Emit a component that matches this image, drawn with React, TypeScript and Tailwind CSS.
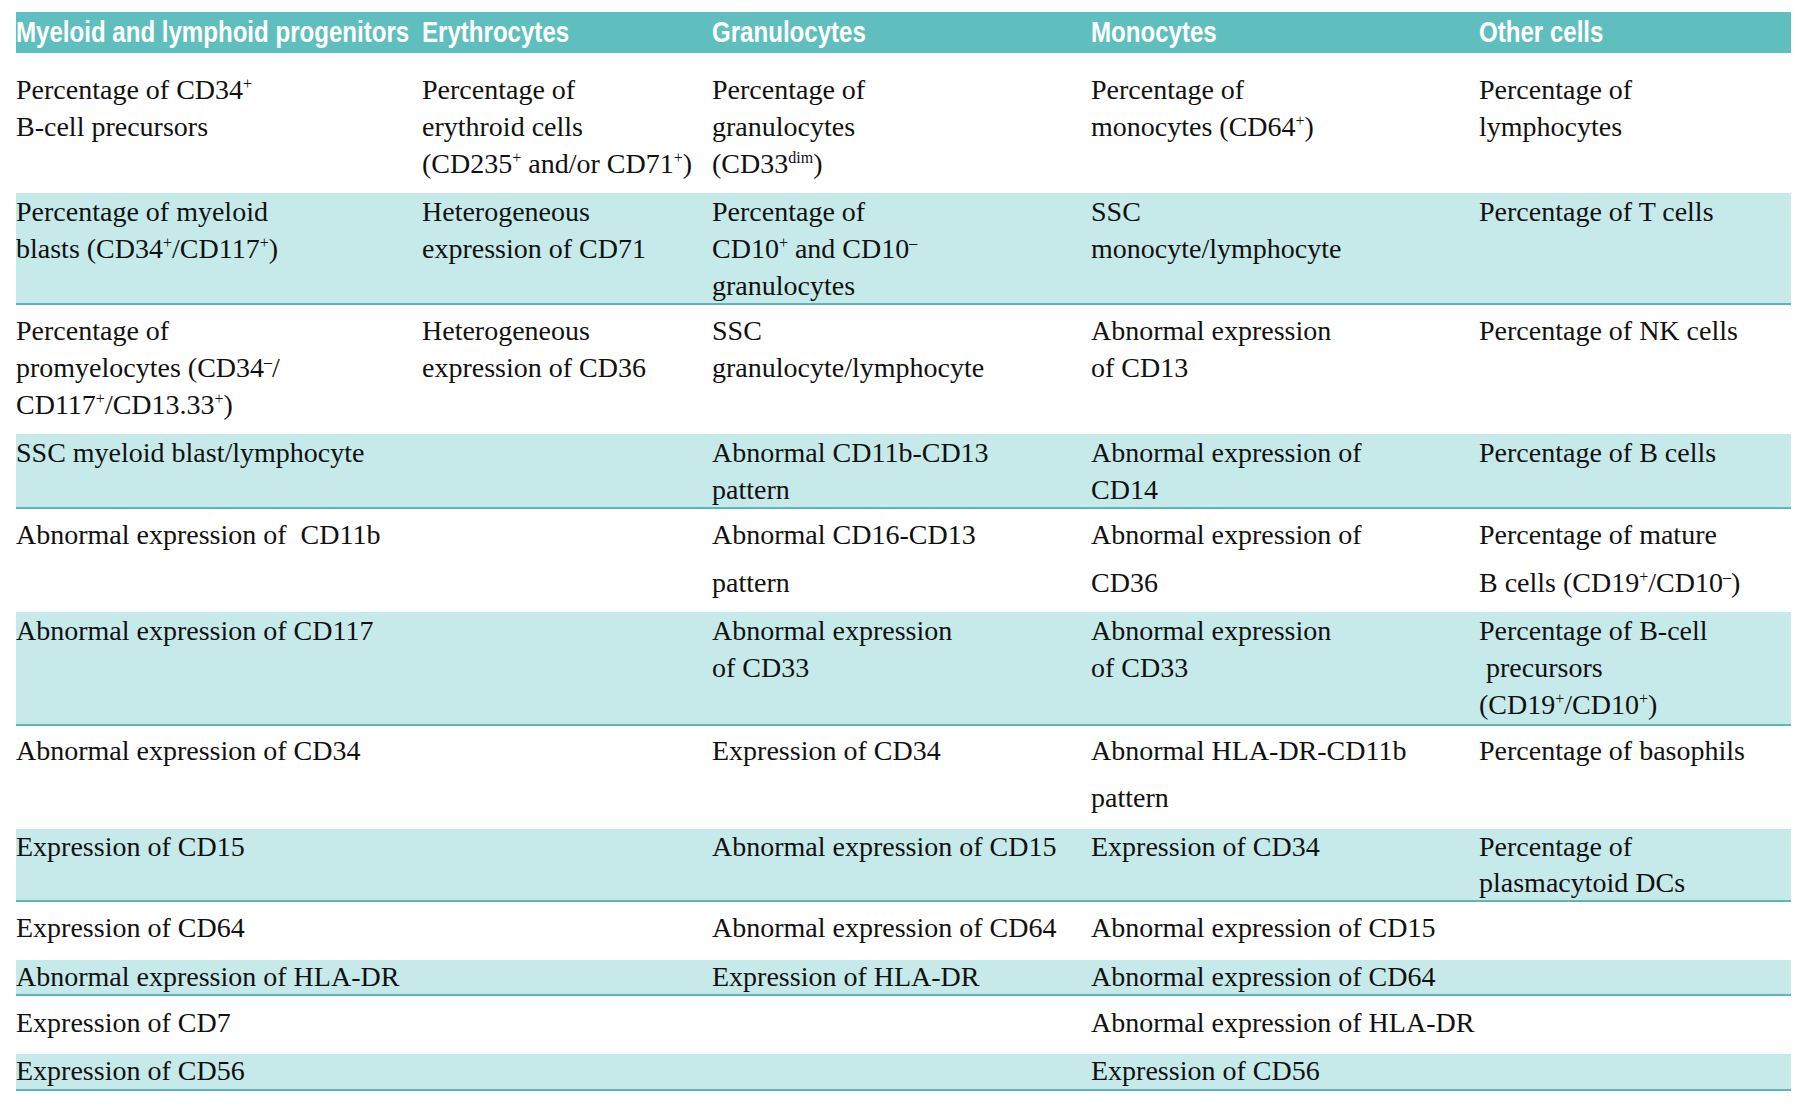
import React from 'react';

type Row = {
  teal: boolean;
  height: string;
  pad: string;
  leading: string;
  cells: React.ReactNode[][];
};

function Sup({ children }: { children: React.ReactNode }) {
  return <sup className="top-[-0.62em] text-[16px]">{children}</sup>;
}

const headers = ['Myeloid and lymphoid progenitors', 'Erythrocytes', 'Granulocytes', 'Monocytes', 'Other cells'];

const rows: Row[] = [
  {
    teal: false,
    height: 'h-[140px]',
    pad: 'pt-[18px]',
    leading: 'leading-[37px]',
    cells: [
      [<>Percentage of CD34<Sup>+</Sup></>, 'B-cell precursors'],
      ['Percentage of', 'erythroid cells', <>(CD235<Sup>+</Sup> and/or CD71<Sup>+</Sup>)</>],
      ['Percentage of', 'granulocytes', <>(CD33<Sup>dim</Sup>)</>],
      ['Percentage of', <>monocytes (CD64<Sup>+</Sup>)</>],
      ['Percentage of', 'lymphocytes'],
    ],
  },
  {
    teal: true,
    height: 'h-[112px]',
    pad: 'pt-0',
    leading: 'leading-[37px]',
    cells: [
      ['Percentage of myeloid', <>blasts (CD34<Sup>+</Sup>/CD117<Sup>+</Sup>)</>],
      ['Heterogeneous', 'expression of CD71'],
      ['Percentage of', <>CD10<Sup>+</Sup> and CD10<Sup>–</Sup></>, 'granulocytes'],
      ['SSC', 'monocyte/lymphocyte'],
      ['Percentage of T cells'],
    ],
  },
  {
    teal: false,
    height: 'h-[129px]',
    pad: 'pt-[7px]',
    leading: 'leading-[37px]',
    cells: [
      ['Percentage of', <>promyelocytes (CD34<Sup>–</Sup>/</>, <>CD117<Sup>+</Sup>/CD13.33<Sup>+</Sup>)</>],
      ['Heterogeneous', 'expression of CD36'],
      ['SSC', 'granulocyte/lymphocyte'],
      ['Abnormal expression', 'of CD13'],
      ['Percentage of NK cells'],
    ],
  },
  {
    teal: true,
    height: 'h-[75px]',
    pad: 'pt-0',
    leading: 'leading-[37px]',
    cells: [
      ['SSC myeloid blast/lymphocyte'],
      [],
      ['Abnormal CD11b-CD13', 'pattern'],
      ['Abnormal expression of', 'CD14'],
      ['Percentage of B cells'],
    ],
  },
  {
    teal: false,
    height: 'h-[103px]',
    pad: 'pt-[2px]',
    leading: 'leading-[48px]',
    cells: [
      ['Abnormal expression of\u00a0 CD11b'],
      [],
      ['Abnormal CD16-CD13', 'pattern'],
      ['Abnormal expression of', 'CD36'],
      ['Percentage of mature', <>B cells (CD19<Sup>+</Sup>/CD10<Sup>–</Sup>)</>],
    ],
  },
  {
    teal: true,
    height: 'h-[114px]',
    pad: 'pt-0',
    leading: 'leading-[37px]',
    cells: [
      ['Abnormal expression of CD117'],
      [],
      ['Abnormal expression', 'of CD33'],
      ['Abnormal expression', 'of CD33'],
      ['Percentage of B-cell', '\u00a0precursors', <>(CD19<Sup>+</Sup>/CD10<Sup>+</Sup>)</>],
    ],
  },
  {
    teal: false,
    height: 'h-[103px]',
    pad: 'pt-[1px]',
    leading: 'leading-[47px]',
    cells: [
      ['Abnormal expression of CD34'],
      [],
      ['Expression of CD34'],
      ['Abnormal HLA-DR-CD11b', 'pattern'],
      ['Percentage of basophils'],
    ],
  },
  {
    teal: true,
    height: 'h-[73px]',
    pad: 'pt-0',
    leading: 'leading-[36px]',
    cells: [
      ['Expression of CD15'],
      [],
      ['Abnormal expression of CD15'],
      ['Expression of CD34'],
      ['Percentage of', 'plasmacytoid DCs'],
    ],
  },
  {
    teal: false,
    height: 'h-[58px]',
    pad: 'pt-[7px]',
    leading: 'leading-[37px]',
    cells: [['Expression of CD64'], [], ['Abnormal expression of CD64'], ['Abnormal expression of CD15'], []],
  },
  {
    teal: true,
    height: 'h-[36px]',
    pad: 'pt-0',
    leading: 'leading-[33px]',
    cells: [['Abnormal expression of HLA-DR'], [], ['Expression of HLA-DR'], ['Abnormal expression of CD64'], []],
  },
  {
    teal: false,
    height: 'h-[58px]',
    pad: 'pt-[8px]',
    leading: 'leading-[37px]',
    cells: [['Expression of CD7'], [], [], ['Abnormal expression of HLA-DR'], []],
  },
  {
    teal: true,
    height: 'h-[37px]',
    pad: 'pt-0',
    leading: 'leading-[33px]',
    cells: [['Expression of CD56'], [], [], ['Expression of CD56'], []],
  },
];

const cols = 'grid grid-cols-[406px_290px_379px_388px_312px]';

export default function App() {
  return (
    <div className="min-h-screen bg-white text-[#111]">
      {/* caption line above the table, only its descenders survive the crop */}
      <div className="h-[12px] overflow-hidden">
        <p className="-mt-[25px] pl-[172px] font-['Liberation_Sans',sans-serif] text-[21px] font-bold leading-[26px] text-[#222]">
          Flow cytometry parameters by type
        </p>
      </div>

      <div className="ml-[16px] w-[1775px]">
        <div className={`${cols} h-[41px] items-center bg-[#5fbfbe]`}>
          {headers.map((h) => (
            <div key={h} className="whitespace-nowrap">
              <span className="inline-block origin-left scale-x-[0.83] font-['Liberation_Sans',sans-serif] text-[29px] font-bold leading-none text-white">
                {h}
              </span>
            </div>
          ))}
        </div>

        {rows.map((row, i) => (
          <div
            key={i}
            className={`${cols} ${row.height} ${row.pad} ${row.leading} overflow-hidden font-['Liberation_Serif',serif] text-[28px] ${
              row.teal ? 'border-b-2 border-[#5cb6b6] bg-[#c6eaea]' : 'bg-white'
            }`}
          >
            {row.cells.map((lines, j) => (
              <div key={j} className="whitespace-nowrap">
                {lines.map((line, k) => (
                  <div key={k}>{line}</div>
                ))}
              </div>
            ))}
          </div>
        ))}
      </div>
    </div>
  );
}
